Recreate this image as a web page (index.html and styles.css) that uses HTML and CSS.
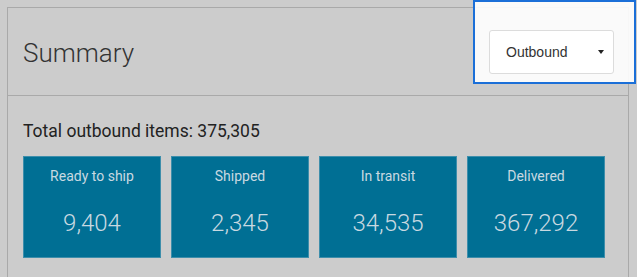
FILE: index.html
```html
<!DOCTYPE html>
<html lang="en">
  <head>
    <meta charset="UTF-8" />
    <title>Summary</title>
    <link rel="stylesheet" href="styles.css">
  </head>
  <body>
    <div class="card">
      <div class="card-header">
        <h1 class="title">Summary</h1>
        <div class="select">
          <span>Outbound</span>
          <span class="caret"></span>
        </div>
      </div>
      <div class="card-body">
        <div class="total">Total outbound items: 375,305</div>
        <div class="tiles">
          <div class="tile">
            <div class="tile-label">Ready to ship</div>
            <div class="tile-value">9,404</div>
          </div>
          <div class="tile">
            <div class="tile-label">Shipped</div>
            <div class="tile-value">2,345</div>
          </div>
          <div class="tile">
            <div class="tile-label">In transit</div>
            <div class="tile-value">34,535</div>
          </div>
          <div class="tile">
            <div class="tile-label">Delivered</div>
            <div class="tile-value">367,292</div>
          </div>
        </div>
      </div>
    </div>
    <div class="highlight"></div>
  </body>
</html>
```

FILE: styles.css
```css
* {
  margin: 0;
  padding: 0;
  box-sizing: border-box;
}

body {
  font-family: Roboto, "Liberation Sans", sans-serif;
  background: #cccccc;
  padding: 7px 8px 0 7px;
  overflow: hidden;
}

.card {
  width: 622px;
  border: 1px solid #a9a9a9;
  border-bottom: none;
  height: 280px;
}

.card-header {
  height: 88px;
  display: flex;
  align-items: center;
  justify-content: space-between;
  padding: 0 14px 0 15px;
  border-bottom: 1px solid #a9a9a9;
}

.title {
  font-size: 26px;
  font-weight: 300;
  color: #333;
  padding-top: 3px;
}

.select {
  width: 125px;
  height: 44px;
  background: #fff;
  border: 1px solid #dcdcdc;
  border-radius: 3px;
  display: flex;
  align-items: center;
  justify-content: space-between;
  padding: 0 9px 0 16px;
  font-family: "Liberation Sans", Arial, sans-serif;
  font-size: 14px;
  color: #333;
  margin-top: 1px;
}

.caret {
  width: 0;
  height: 0;
  border-left: 3px solid transparent;
  border-right: 3px solid transparent;
  border-top: 4px solid #222;
}

.card-body {
  padding: 25px 14px 0 15px;
}

.total {
  font-size: 17.5px;
  color: #222;
  line-height: 21px;
  margin-bottom: 14px;
}

.tiles {
  display: flex;
  gap: 10px;
}

.tile {
  width: 138px;
  height: 102px;
  background: #006f94;
  border: 1px solid #3d8eab;
  color: #c9d9e1;
  text-align: center;
  padding-top: 11px;
}

.tile-label {
  font-size: 14px;
  line-height: 17px;
}

.tile-value {
  font-size: 24px;
  font-weight: 300;
  margin-top: 24px;
}

.highlight {
  position: absolute;
  left: 473px;
  top: 0;
  width: 163px;
  height: 84px;
  border: 2px solid #1b6fd8;
  background: rgba(255, 255, 255, 0.9);
  z-index: 1;
}

.card-header .select {
  position: relative;
  z-index: 2;
}
```
